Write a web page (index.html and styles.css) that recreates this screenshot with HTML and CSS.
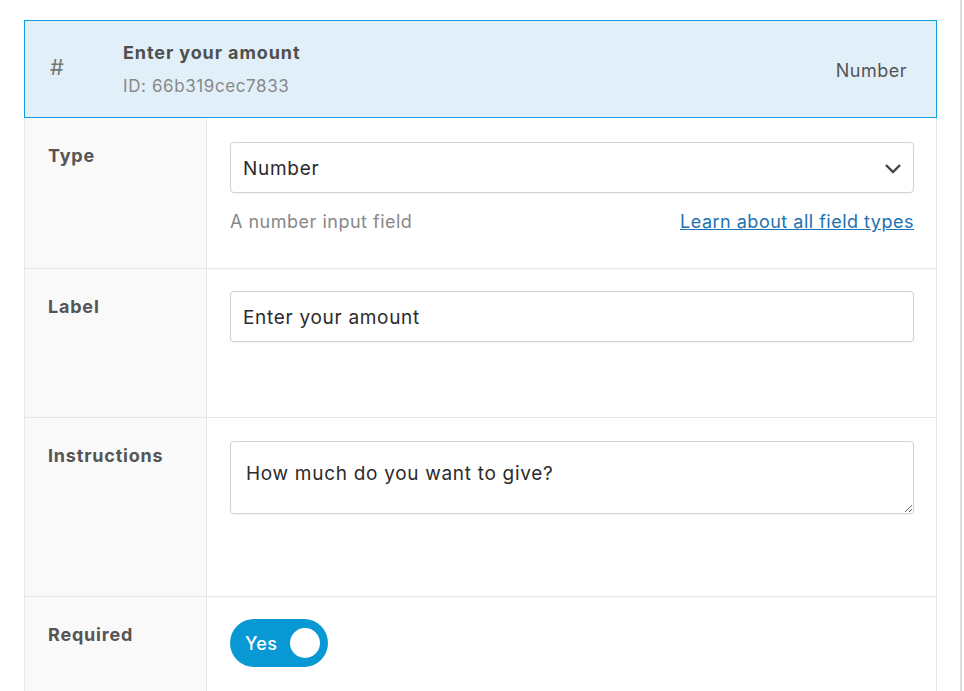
FILE: index.html
```html
<!DOCTYPE html>
<html>
<head>
    <title>Field settings</title>
    <link rel="stylesheet" href="styles.css">
</head>
<body>
    <div class="wrap">
        <div class="field-panel">
            <div class="field-head">
                <span class="field-icon">#</span>
                <div class="field-name">
                    <div class="field-title">Enter your amount</div>
                    <div class="field-id">ID: 66b319cec7833</div>
                </div>
                <span class="field-kind">Number</span>
            </div>

            <div class="row row-type">
                <div class="row-label">Type</div>
                <div class="row-field">
                    <div class="select">
                        <span>Number</span>
                        <svg width="18" height="11" viewBox="0 0 18 11"><path d="M2 2l7 7 7-7" fill="none" stroke="#444" stroke-width="2.4"/></svg>
                    </div>
                    <div class="hint">
                        <span>A number input field</span>
                        <a href="#">Learn about all field types</a>
                    </div>
                </div>
            </div>

            <div class="row row-label-field">
                <div class="row-label">Label</div>
                <div class="row-field">
                    <input type="text" class="text-input" value="Enter your amount">
                </div>
            </div>

            <div class="row row-instructions">
                <div class="row-label">Instructions</div>
                <div class="row-field">
                    <textarea class="text-area">How much do you want to give?</textarea>
                </div>
            </div>

            <div class="row row-required">
                <div class="row-label">Required</div>
                <div class="row-field">
                    <div class="toggle">
                        <span>Yes</span>
                        <span class="knob"></span>
                    </div>
                </div>
            </div>
        </div>
    </div>
</body>
</html>
```

FILE: styles.css
```css
body {
    margin: 0;
    font-family: Inter, "Noto Sans", sans-serif;
    background: #fff;
    color: #333;
}
.wrap {
    width: 962px;
    height: 691px;
    border-right: 2px solid #dedede;
    padding: 20px 0 0 24px;
    box-sizing: border-box;
    overflow: hidden;
}
.field-panel {
    width: 913px;
}
.field-head {
    display: flex;
    align-items: center;
    height: 98px;
    box-sizing: border-box;
    border: 1px solid #0b9fdc;
    background: #e1eff9;
    padding: 0 29px 0 25px;
}
.field-icon {
    width: 73px;
    font-size: 22px;
    color: #777;
    margin-top: -5px;
}
.field-name {
    flex: 1;
}
.field-title {
    font-size: 18px;
    letter-spacing: 0.9px;
    font-weight: 700;
    color: #4f4f4f;
}
.field-id {
    font-size: 17px;
    letter-spacing: 0.6px;
    color: #888;
    margin-top: 13px;
}
.field-kind {
    font-size: 18px;
    letter-spacing: 0.5px;
    color: #555;
    margin-top: 2px;
}
.row {
    display: flex;
    box-sizing: border-box;
    border-bottom: 1px solid #e6e6e6;
    border-right: 1px solid #e6e6e6;
}
.row-label {
    width: 183px;
    flex-shrink: 0;
    background: #f9f9f9;
    border-left: 1px solid #e6e6e6;
    border-right: 1px solid #e6e6e6;
    padding: 27px 0 0 23px;
    box-sizing: border-box;
    font-size: 18px;
    letter-spacing: 0.8px;
    font-weight: 700;
    color: #555;
}
.row-field {
    flex: 1;
    padding: 24px 22px 0 23px;
}
.row-type { height: 151px; }
.row-label-field { height: 149px; }
.row-label-field .row-field { padding-top: 22px; }
.row-instructions { height: 179px; }
.row-instructions .row-field { padding-top: 23px; }
.row-required { height: 120px; border-bottom: none; }
.row-required .row-field { padding-top: 22px; }
.select, .text-input, .text-area {
    box-sizing: border-box;
    width: 100%;
    border: 1px solid #cfd2da;
    border-radius: 4px;
    background: #fff;
    font-family: Inter, "Noto Sans", sans-serif;
    font-size: 19px;
    letter-spacing: 0.7px;
    color: #2b2b2b;
    box-shadow: 0 1px 2px rgba(0, 0, 0, 0.05);
}
.select {
    display: flex;
    align-items: center;
    justify-content: space-between;
    height: 51px;
    padding: 2px 11px 0 12px;
}
.hint {
    display: flex;
    justify-content: space-between;
    margin-top: 18px;
    font-size: 18px;
    letter-spacing: 0.5px;
    color: #888;
}
.hint a {
    color: #2271b1;
}
.text-input {
    display: block;
    height: 51px;
    padding: 2px 12px 0;
}
.text-area {
    display: block;
    height: 73px;
    padding: 20px 15px 0;
    resize: vertical;
}
.toggle {
    display: inline-flex;
    align-items: center;
    width: 98px;
    height: 48px;
    box-sizing: border-box;
    border-radius: 24px;
    background: #0899d4;
    color: #fff;
    font-size: 18px;
    letter-spacing: 0.3px;
    font-weight: 500;
    padding: 0 8px 0 15px;
    justify-content: space-between;
}
.knob {
    width: 30px;
    height: 30px;
    border-radius: 50%;
    background: #fff;
}
```
